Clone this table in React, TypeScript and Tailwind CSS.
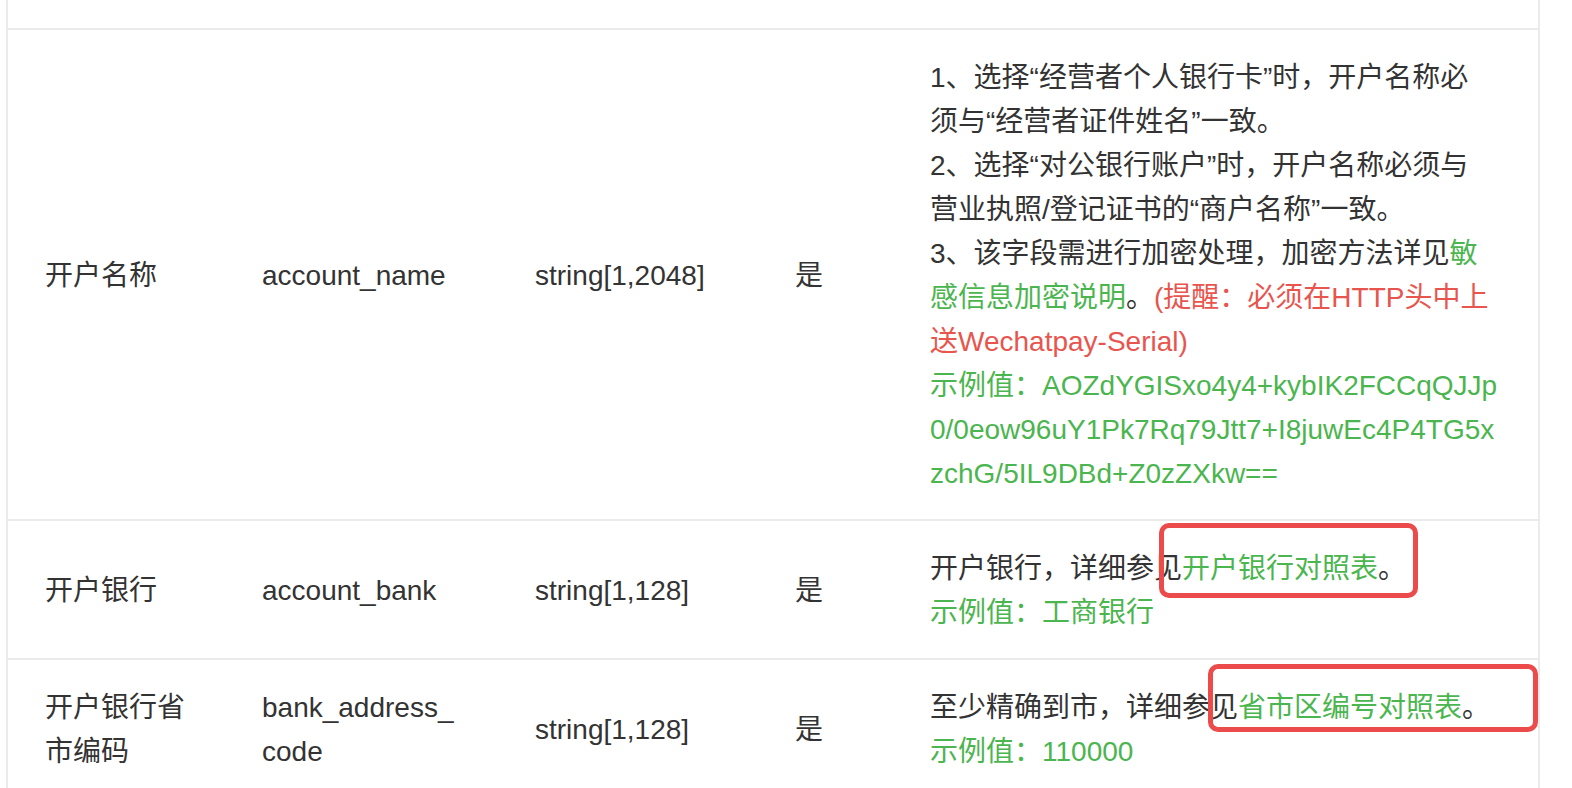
import React from "react";

const green = "text-[#4bb54f]";
const red = "text-[#e8554e]";

function Row({
  cells,
  last,
}: {
  cells: React.ReactNode[];
  last?: boolean;
}) {
  return (
    <div
      className={`grid grid-cols-[217px_273px_260px_135px_645px] items-center pt-[26px] pb-[23px] ${
        last ? "" : "border-b-2 border-[#ebebeb]"
      }`}
    >
      {cells.map((c, i) => (
        <div key={i} className="px-[37px] whitespace-nowrap">
          {c}
        </div>
      ))}
    </div>
  );
}

export default function App() {
  return (
    <div className="relative w-[1572px] h-[788px] overflow-hidden bg-white font-['Liberation_Sans','Noto_Sans_CJK_SC',sans-serif] text-[28px] leading-[44px] text-[#333333]">
      <div className="ml-[6px] w-[1534px] border-x-2 border-[#ebebeb]">
        {/* cut-off row above */}
        <div className="h-[30px] border-b-2 border-[#ebebeb]" />

        <Row
          cells={[
            "开户名称",
            "account_name",
            "string[1,2048]",
            "是",
            <div>
              1、选择“经营者个人银行卡”时，开户名称必
              <br />
              须与“经营者证件姓名”一致。
              <br />
              2、选择“对公银行账户”时，开户名称必须与
              <br />
              营业执照/登记证书的“商户名称”一致。
              <br />
              3、该字段需进行加密处理，加密方法详见<span className={green}>敏</span>
              <br />
              <span className={green}>感信息加密说明</span>。
              <span className={red}>(提醒：必须在HTTP头中上</span>
              <br />
              <span className={red}>送Wechatpay-Serial)</span>
              <br />
              <span className={green}>
                示例值：AOZdYGISxo4y4+kybIK2FCCqQJJp
                <br />
                0/0eow96uY1Pk7Rq79Jtt7+I8juwEc4P4TG5x
                <br />
                zchG/5IL9DBd+Z0zZXkw==
              </span>
            </div>,
          ]}
        />

        <Row
          cells={[
            "开户银行",
            "account_bank",
            "string[1,128]",
            "是",
            <div>
              开户银行，详细参见<span className={green}>开户银行对照表</span>。
              <br />
              <span className={green}>示例值：工商银行</span>
            </div>,
          ]}
        />

        <Row
          last
          cells={[
            <div>
              开户银行省
              <br />
              市编码
            </div>,
            <div>
              bank_address_
              <br />
              code
            </div>,
            "string[1,128]",
            "是",
            <div>
              至少精确到市，详细参见<span className={green}>省市区编号对照表</span>。
              <br />
              <span className={green}>示例值：110000</span>
            </div>,
          ]}
        />
      </div>

      {/* red annotation boxes */}
      <div className="absolute left-[1159px] top-[523px] w-[259px] h-[75px] border-[5px] border-[#eb4b4b] rounded-[10px]" />
      <div className="absolute left-[1208px] top-[664px] w-[330px] h-[68px] border-[5px] border-[#eb4b4b] rounded-[10px]" />
    </div>
  );
}
